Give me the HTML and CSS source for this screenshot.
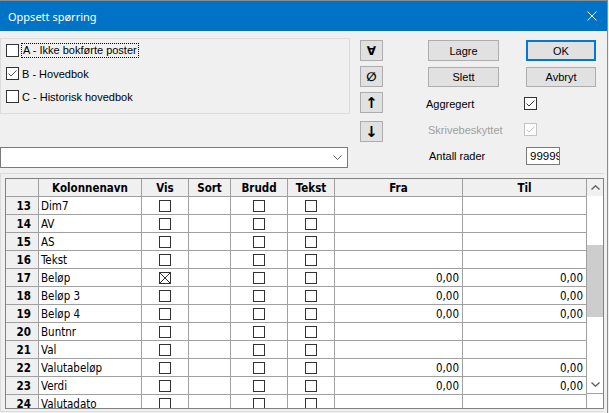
FILE: index.html
```html
<!DOCTYPE html>
<html lang="no">
<head>
<meta charset="utf-8">
<title>Oppsett spørring</title>
<link rel="stylesheet" href="styles.css">
</head>
<body>
<div class="window">
  <div class="titlebar">
    <span class="title">Oppsett spørring</span>
    <svg class="close" width="10" height="10" viewBox="0 0 10 10"><path d="M0.5 0.5 L9.5 9.5 M9.5 0.5 L0.5 9.5" stroke="#fff" stroke-width="1" fill="none"/></svg>
  </div>
  <div class="top">
    <div class="left">
      <div class="group">
        <div class="opt"><span class="box"></span><span class="lbl focus">A - Ikke bokførte poster</span></div>
        <div class="opt"><span class="box"><svg width="11" height="11" viewBox="0 0 11 11"><path d="M1.5 5.5 L4 8 L9.5 2.5" stroke="#555" stroke-width="1" fill="none"/></svg></span><span class="lbl">B - Hovedbok</span></div>
        <div class="opt"><span class="box"></span><span class="lbl">C - Historisk hovedbok</span></div>
      </div>
      <div class="combo">
        <svg class="chev" width="9" height="5" viewBox="0 0 9 5"><path d="M0.5 0.5 L4.5 4.5 L8.5 0.5" stroke="#606060" stroke-width="1" fill="none"/></svg>
      </div>
    </div>
    <div class="tools">
      <div class="tool">∀</div>
      <div class="tool t2">∅</div>
      <div class="tool t3 arr">↑</div>
      <div class="tool t4 arr">↓</div>
    </div>
    <div class="right">
      <div class="btnrow">
        <div class="btn">Lagre</div>
        <div class="btn ok">OK</div>
      </div>
      <div class="btnrow r2">
        <div class="btn">Slett</div>
        <div class="btn">Avbryt</div>
      </div>
      <div class="field f1">
        <span class="flabel agg">Aggregert</span>
        <span class="box"><svg width="11" height="11" viewBox="0 0 11 11"><path d="M1.5 5.5 L4 8 L9.5 2.5" stroke="#333" stroke-width="1" fill="none"/></svg></span>
      </div>
      <div class="field f2">
        <span class="flabel dis">Skrivebeskyttet</span>
        <span class="box disbox"><svg width="11" height="11" viewBox="0 0 11 11"><path d="M1.5 5.5 L4 8 L9.5 2.5" stroke="#c4c4c4" stroke-width="1" fill="none"/></svg></span>
      </div>
      <div class="field f3">
        <span class="flabel ant">Antall rader</span>
        <span class="input">99999</span>
      </div>
    </div>
  </div>
  <div class="gridpanel">
    <div class="grid">
      <div class="table">
        <div class="row head">
          <div></div><div>Kolonnenavn</div><div>Vis</div><div>Sort</div><div>Brudd</div><div>Tekst</div><div>Fra</div><div>Til</div>
        </div>
        <div class="row"><div class="num">13</div><div class="name">Dim7</div><div class="c"><span class="cb"></span></div><div></div><div class="c"><span class="cb"></span></div><div class="c"><span class="cb"></span></div><div class="v"></div><div class="v"></div></div>
        <div class="row"><div class="num">14</div><div class="name">AV</div><div class="c"><span class="cb"></span></div><div></div><div class="c"><span class="cb"></span></div><div class="c"><span class="cb"></span></div><div class="v"></div><div class="v"></div></div>
        <div class="row"><div class="num">15</div><div class="name">AS</div><div class="c"><span class="cb"></span></div><div></div><div class="c"><span class="cb"></span></div><div class="c"><span class="cb"></span></div><div class="v"></div><div class="v"></div></div>
        <div class="row"><div class="num">16</div><div class="name">Tekst</div><div class="c"><span class="cb"></span></div><div></div><div class="c"><span class="cb"></span></div><div class="c"><span class="cb"></span></div><div class="v"></div><div class="v"></div></div>
        <div class="row"><div class="num">17</div><div class="name">Beløp</div><div class="c"><span class="cb"><svg width="10" height="10" viewBox="0 0 10 10"><path d="M0 0 L10 10 M10 0 L0 10" stroke="#333" stroke-width="1" fill="none"/></svg></span></div><div></div><div class="c"><span class="cb"></span></div><div class="c"><span class="cb"></span></div><div class="v">0,00</div><div class="v">0,00</div></div>
        <div class="row"><div class="num">18</div><div class="name">Beløp 3</div><div class="c"><span class="cb"></span></div><div></div><div class="c"><span class="cb"></span></div><div class="c"><span class="cb"></span></div><div class="v">0,00</div><div class="v">0,00</div></div>
        <div class="row"><div class="num">19</div><div class="name">Beløp 4</div><div class="c"><span class="cb"></span></div><div></div><div class="c"><span class="cb"></span></div><div class="c"><span class="cb"></span></div><div class="v">0,00</div><div class="v">0,00</div></div>
        <div class="row"><div class="num">20</div><div class="name">Buntnr</div><div class="c"><span class="cb"></span></div><div></div><div class="c"><span class="cb"></span></div><div class="c"><span class="cb"></span></div><div class="v"></div><div class="v"></div></div>
        <div class="row"><div class="num">21</div><div class="name">Val</div><div class="c"><span class="cb"></span></div><div></div><div class="c"><span class="cb"></span></div><div class="c"><span class="cb"></span></div><div class="v"></div><div class="v"></div></div>
        <div class="row"><div class="num">22</div><div class="name">Valutabeløp</div><div class="c"><span class="cb"></span></div><div></div><div class="c"><span class="cb"></span></div><div class="c"><span class="cb"></span></div><div class="v">0,00</div><div class="v">0,00</div></div>
        <div class="row"><div class="num">23</div><div class="name">Verdi</div><div class="c"><span class="cb"></span></div><div></div><div class="c"><span class="cb"></span></div><div class="c"><span class="cb"></span></div><div class="v">0,00</div><div class="v">0,00</div></div>
        <div class="row"><div class="num">24</div><div class="name">Valutadato</div><div class="c"><span class="cb"></span></div><div></div><div class="c"><span class="cb"></span></div><div class="c"><span class="cb"></span></div><div class="v"></div><div class="v"></div></div>
      </div>
      <div class="scroll">
        <div class="arrow up"><svg width="9" height="5" viewBox="0 0 9 5"><path d="M0.5 4.5 L4.5 0.8 L8.5 4.5" stroke="#606060" stroke-width="1.4" fill="none"/></svg></div>
        <div class="track"><div class="thumb"></div></div>
        <div class="arrow down"><svg width="9" height="5" viewBox="0 0 9 5"><path d="M0.5 0.5 L4.5 4.2 L8.5 0.5" stroke="#606060" stroke-width="1.4" fill="none"/></svg></div>
        <div class="corner"></div>
      </div>
    </div>
  </div>
</div>
</body>
</html>
```
FILE: styles.css
```css
* { box-sizing: border-box; }
html, body { margin: 0; padding: 0; }
body {
  width: 609px;
  height: 413px;
  overflow: hidden;
  background: #f0f0f0;
  font-family: "Liberation Sans", Arial, sans-serif;
  font-size: 11px;
  color: #000;
}
.window {
  width: 608px;
  height: 413px;
  border-top: 1px solid #8c8c8c;
  border-right: 1px solid #8c8c8c;
  background: #f0f0f0;
  display: flex;
  flex-direction: column;
}
.titlebar {
  height: 30px;
  flex: none;
  background: #0173c7;
  color: #fff;
  display: flex;
  align-items: center;
  justify-content: space-between;
  padding: 0 10px 0 8px;
  font-family: "Noto Sans", "Open Sans", sans-serif;
  font-size: 11px;
}
.top { height: 142px; flex: none; display: flex; }
.left { width: 350px; flex: none; display: flex; flex-direction: column; }
.group {
  margin-top: 7px;
  height: 76px;
  border: 1px solid #dcdcdc;
  padding: 5px 0 0 5px;
  display: flex;
  flex-direction: column;
  gap: 10px;
}
.opt { height: 13px; display: flex; align-items: center; }
.box {
  width: 13px;
  height: 13px;
  flex: none;
  border: 1px solid #333;
  background: #fff;
  display: flex;
}
.disbox { border-color: #c4c4c4; }
.lbl { margin-left: 3px; white-space: nowrap; }
.lbl.focus {
  margin-left: 2px;
  padding: 0 1px;
  border: 1px dotted #000;
  line-height: 13px;
}
.combo {
  margin-top: 33px;
  width: 348px;
  height: 21px;
  border: 1px solid #7a7a7a;
  background: #fff;
  display: flex;
  align-items: center;
  justify-content: flex-end;
  padding-right: 5px;
}
.tools { margin-left: 10px; margin-top: 9px; width: 23px; flex: none; display: flex; flex-direction: column; }
.tool {
  height: 21px;
  border: 1px solid #adadad;
  background: #e1e1e1;
  display: flex;
  align-items: center;
  justify-content: center;
  font-family: "DejaVu Sans", sans-serif;
  font-weight: bold;
  font-size: 12px;
}
.tool.arr { font-size: 15px; }
.t2, .t3 { margin-top: 5px; }
.t4 { margin-top: 8px; }
.right { margin-left: 45px; margin-top: 9px; display: flex; flex-direction: column; }
.btnrow { display: flex; gap: 27px; }
.btn {
  width: 71px;
  height: 21px;
  border: 1px solid #adadad;
  background: #e1e1e1;
  display: flex;
  align-items: center;
  justify-content: center;
}
.btnrow .btn + .btn { width: 70px; }
.btn.ok { border: 2px solid #0078d7; }
.r2 { margin-top: 6px; }
.r2 .btn { height: 20px; }
.field { display: flex; align-items: center; }
.f1 { margin-top: 10px; height: 13px; }
.f2 { margin-top: 13px; height: 13px; }
.f3 { margin-top: 11px; height: 18px; }
.flabel { width: 96px; white-space: nowrap; }
.flabel.agg { margin-left: -2px; width: 98px; }
.flabel.dis { color: #a0a0a0; }
.flabel.ant { margin-left: 1px; width: 97px; }
.input {
  width: 34px;
  height: 18px;
  border: 1px solid #7a7a7a;
  background: #fff;
  padding-left: 3px;
  overflow: hidden;
  white-space: nowrap;
  line-height: 16px;
  font-size: 11.5px;
}
.gridpanel {
  flex: none;
  width: 604px;
  border-top: 1px solid #dcdcdc;
  border-left: 1px solid #dcdcdc;
  border-bottom: 1px solid #dcdcdc;
  padding: 4px 0 2px 4px;
}
.grid {
  height: 231px;
  border: 1px solid #828282;
  display: flex;
  background: #fff;
  font-family: "DejaVu Sans Condensed", "DejaVu Sans", sans-serif;
  font-stretch: condensed;
  font-size: 11.5px;
}
.table { width: 581px; flex: none; overflow: hidden; }
.row {
  display: grid;
  grid-template-columns: 33px 103px 47px 42px 57px 47px 128px 124px;
  height: 18px;
}
.row > div {
  border-right: 1px solid #a0a0a0;
  border-bottom: 1px solid #a0a0a0;
  display: flex;
  align-items: center;
  overflow: hidden;
  white-space: nowrap;
}
.head > div { background: #f0f0f0; font-weight: bold; justify-content: center; }
.num { background: #f0f0f0; font-weight: bold; justify-content: flex-end; padding-right: 7px; }
.name { padding-left: 2px; }
.c { justify-content: center; }
.v { justify-content: flex-end; padding-right: 3px; }
.cb {
  width: 12px;
  height: 12px;
  border: 1px solid #333;
  background: #fff;
  display: flex;
}
.scroll { width: 16px; flex: none; display: flex; flex-direction: column; background: #fff; }
.arrow { height: 17px; flex: none; display: flex; align-items: center; justify-content: center; }
.arrow.up { background: #f0f0f0; }
.track { height: 180px; flex: none; padding-top: 49px; }
.thumb { height: 72px; background: #cdcdcd; }
.corner { flex: 1; border-top: 1px solid #a0a0a0; }
```
